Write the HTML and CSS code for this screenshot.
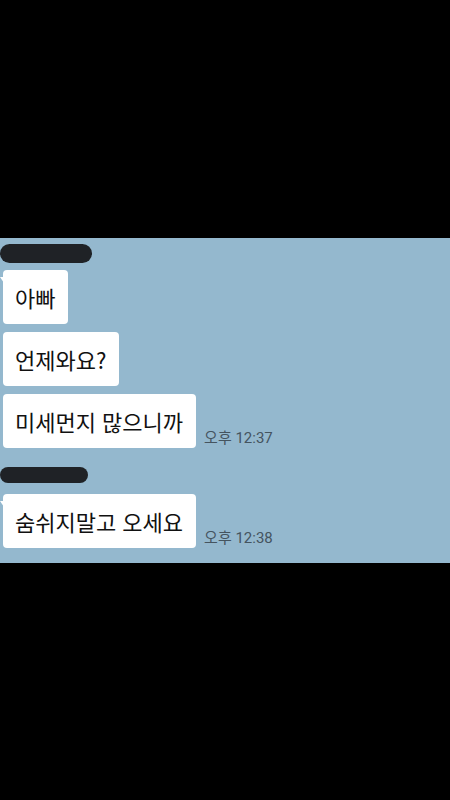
FILE: index.html
```html
<!DOCTYPE html>
<html lang="ko">
<head>
    <meta charset="UTF-8">
    <meta name="viewport" content="width=device-width, initial-scale=1.0">
    <title>채팅</title>
    <link rel="stylesheet" href="styles.css">
</head>
<body>
    <section class="chat">
        <div class="name-blot"></div>
        <div class="row">
            <div class="bubble first">아빠</div>
        </div>
        <div class="row">
            <div class="bubble">언제와요?</div>
        </div>
        <div class="row">
            <div class="bubble">미세먼지 많으니까</div>
            <span class="time">오후 12:37</span>
        </div>

        <div class="name-blot second"></div>
        <div class="row">
            <div class="bubble first">숨쉬지말고 오세요</div>
            <span class="time">오후 12:38</span>
        </div>
    </section>
</body>
</html>
```

FILE: styles.css
```css
* {
    margin: 0;
    padding: 0;
    box-sizing: border-box;
}

body {
    width: 450px;
    height: 800px;
    background: #000;
    display: flex;
    align-items: center;
    font-family: "Noto Sans CJK KR", "Noto Sans", sans-serif;
    color: #111;
}

.chat {
    width: 100%;
    height: 325px;
    background: #94b8ce;
    padding-top: 6px;
}

/* 가려진 이름 */
.name-blot {
    width: 92px;
    height: 19px;
    background: #1f2226;
    border-radius: 10px;
    margin-bottom: 7px;
}

.name-blot.second {
    width: 88px;
    height: 16px;
    margin-top: 19px;
    margin-bottom: 11px;
}

.row {
    display: flex;
    align-items: flex-end;
    margin-bottom: 8px;
}

.bubble {
    position: relative;
    margin-left: 3px;
    background: #fff;
    border-radius: 4px;
    padding: 12px 13px 12px 12px;
    font-size: 22px;
    line-height: 30px;
    white-space: nowrap;
}

.bubble.first::before {
    content: "";
    position: absolute;
    left: -3px;
    top: 7px;
    border-top: 6px solid #fff;
    border-left: 4px solid transparent;
}

.time {
    margin-left: 8px;
    margin-bottom: 1px;
    font-family: Roboto, "Noto Sans CJK KR", sans-serif;
    font-size: 15px;
    color: #45545f;
}
```
